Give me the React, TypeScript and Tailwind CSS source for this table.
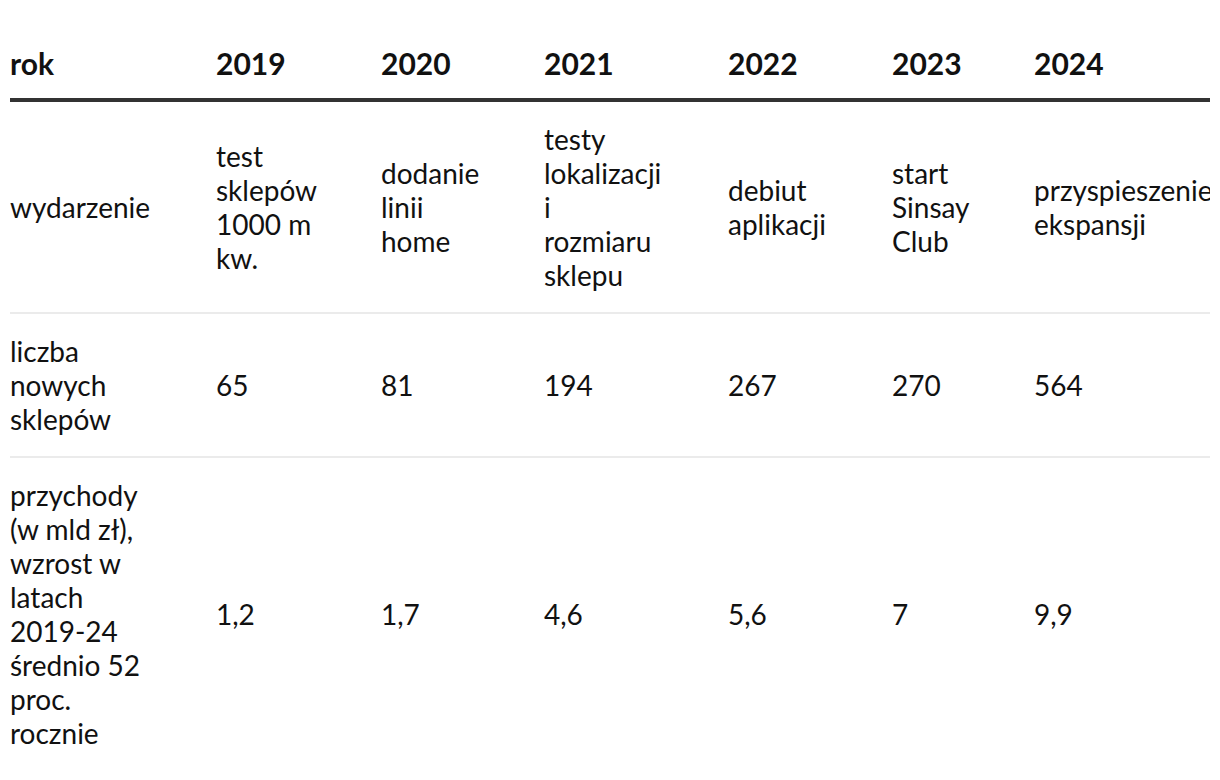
import React from 'react';

interface Row {
  label: string;
  values: string[];
}

const years = ['2019', '2020', '2021', '2022', '2023', '2024'];

const rows: Row[] = [
  {
    label: 'wydarzenie',
    values: [
      'test sklepów 1000 m kw.',
      'dodanie linii home',
      'testy lokalizacji i rozmiaru sklepu',
      'debiut aplikacji',
      'start Sinsay Club',
      'przyspieszenie ekspansji',
    ],
  },
  {
    label: 'liczba nowych sklepów',
    values: ['65', '81', '194', '267', '270', '564'],
  },
  {
    label: 'przychody (w mld zł), wzrost w latach 2019-24 średnio 52 proc. rocznie',
    values: ['1,2', '1,7', '4,6', '5,6', '7', '9,9'],
  },
];

export default function App() {
  return (
    <div className="bg-white min-h-[780px] pt-[30px] text-[#111]" style={{ fontFamily: 'Lato, "Noto Sans", sans-serif' }}>
      <div className="mx-[10px] overflow-hidden">
        <table className="table-fixed border-collapse w-[1224px]">
          <colgroup>
            <col className="w-[206px]" />
            <col className="w-[165px]" />
            <col className="w-[163px]" />
            <col className="w-[184px]" />
            <col className="w-[164px]" />
            <col className="w-[142px]" />
            <col className="w-[200px]" />
          </colgroup>
          <thead>
            <tr className="border-b-4 border-[#333]">
              <th className="text-left align-middle pt-[16px] pb-[18px] text-[30px] leading-[34px] font-bold">rok</th>
              {years.map((y) => (
                <th key={y} className="text-left align-middle pt-[16px] pb-[18px] text-[30px] leading-[34px] font-bold">
                  {y}
                </th>
              ))}
            </tr>
          </thead>
          <tbody>
            {rows.map((row, i) => (
              <tr key={i} className={i < rows.length - 1 ? 'border-b-2 border-[#ebebeb]' : ''}>
                <td className="align-middle py-[20px] text-[28px] leading-[34px]">
                  <div className="w-[146px]">{row.label}</div>
                </td>
                {row.values.map((v, j) => (
                  <td key={j} className="align-middle py-[20px] text-[28px] leading-[34px]">
                    <div className="w-[104px]">{v}</div>
                  </td>
                ))}
              </tr>
            ))}
          </tbody>
        </table>
      </div>
    </div>
  );
}
